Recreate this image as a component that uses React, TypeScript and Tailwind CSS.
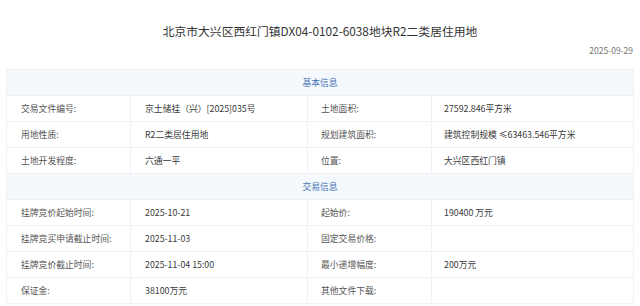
const basic: [string, string, string, string][] = [
  ['交易文件编号:', '京土储挂（兴）[2025]035号', '土地面积:', '27592.846平方米'],
  ['用地性质:', 'R2二类居住用地', '规划建筑面积:', '建筑控制规模 ≤63463.546平方米'],
  ['土地开发程度:', '六通一平', '位置:', '大兴区西红门镇'],
];

const trade: [string, string, string, string][] = [
  ['挂牌竞价起始时间:', '2025-10-21', '起始价:', '190400 万元'],
  ['挂牌竞买申请截止时间:', '2025-11-03', '固定交易价格:', ''],
  ['挂牌竞价截止时间:', '2025-11-04 15:00', '最小递增幅度:', '200万元'],
  ['保证金:', '38100万元', '其他文件下载:', ''],
];

function Section({ title, rows }: { title: string; rows: [string, string, string, string][] }) {
  return (
    <>
      <tr className="h-[26px] bg-[#f5f8fc]">
        <td colSpan={4} className="border border-[#eff1f4] text-center text-[#4775b4]">
          {title}
        </td>
      </tr>
      {rows.map((r, i) => (
        <tr key={i} className="h-[26px]">
          <td className="border border-[#eff1f4] pl-[14px] text-[#555]">{r[0]}</td>
          <td className="border border-[#eff1f4] pl-[14px] text-[#3a3a3a]">{r[1]}</td>
          <td className="border border-[#eff1f4] pl-[13px] text-[#555]">{r[2]}</td>
          <td className="border border-[#eff1f4] pl-[12px] text-[#3a3a3a]">{r[3]}</td>
        </tr>
      ))}
    </>
  );
}

export default function App() {
  return (
    <div className="w-[640px] h-[306px] overflow-hidden bg-white flex flex-col" style={{ fontFamily: '"Noto Sans CJK SC", "Noto Sans", sans-serif' }}>
      <h1 className="mt-[22px] text-center text-[11.8px] font-normal leading-[18px] text-[#333]">
        北京市大兴区西红门镇DX04-0102-6038地块R2二类居住用地
      </h1>
      <div className="mt-[4px] pr-[7px] text-right text-[8.5px] leading-[12px] text-[#777]">2025-09-29</div>
      <div className="mt-[13px] px-[6px]">
        <table className="w-[627px] table-fixed border-collapse text-[8.8px]">
          <colgroup>
            <col className="w-[124px]" />
            <col className="w-[177px]" />
            <col className="w-[124px]" />
            <col className="w-[202px]" />
          </colgroup>
          <tbody>
            <Section title="基本信息" rows={basic} />
            <Section title="交易信息" rows={trade} />
          </tbody>
        </table>
      </div>
    </div>
  );
}
